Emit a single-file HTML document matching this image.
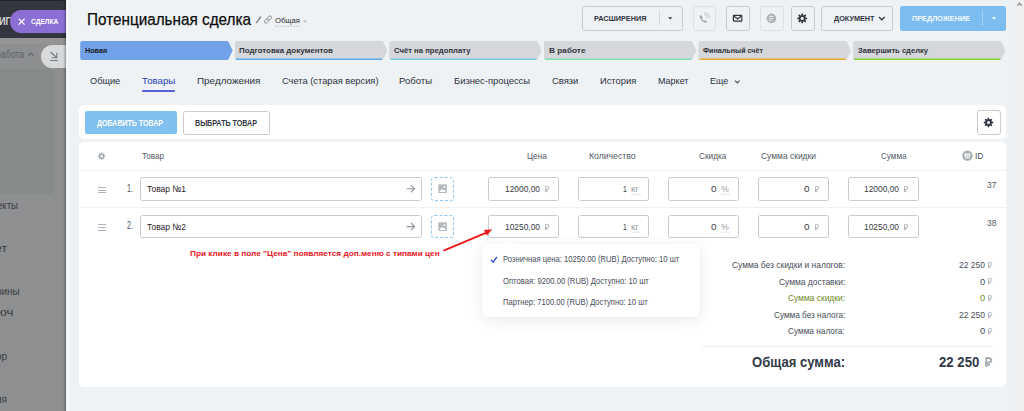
<!DOCTYPE html>
<html><head><meta charset="utf-8"><style>
html,body{margin:0;padding:0;width:1024px;height:411px;overflow:hidden;background:#eef2f4;position:relative;font-family:'Liberation Sans',sans-serif}
.t{position:absolute;white-space:nowrap}
.a{position:absolute;box-sizing:border-box}
</style></head><body>
<div class=a style="left:0px;top:0px;width:67px;height:411px;background:#8e8f91"></div>
<div class=a style="left:-20px;top:69px;width:75.3px;height:125px;background:#878a8a;border-radius:7px"></div>
<div class=a style="left:0px;top:37.5px;width:67px;height:6.5px;background:#939597"></div>
<div class=a style="left:0px;top:0px;width:67px;height:37.5px;background:#33363e"></div>
<div class=a style="left:0px;top:0px;width:67px;height:1px;background:#222428"></div>
<div class=a style="left:9.8px;top:9.7px;width:80px;height:23.4px;background:#8b6fd5;border-radius:12px"></div>
<svg class=a style="left:0;top:0" width="67" height="70" viewBox="0 0 67 70"><path d="M18.6,18.6 L24.6,24.6 M24.6,18.6 L18.6,24.6" stroke="#fff" stroke-width="1.3"/><path d="M28,56.4 L31,53 L34,56.4" stroke="#606367" stroke-width="1.1" fill="none"/></svg>
<div class=a style="left:40.9px;top:45.1px;width:60px;height:22.8px;background:#d7d9da;border-radius:11.4px"></div>
<svg class=a style="left:0;top:0" width="67" height="70" viewBox="0 0 67 70"><path d="M50.5,52 L56.5,57.5 M56.8,52.8 L56.8,57.8 L51.8,57.8 M50.2,60.5 L58,60.5" stroke="#777b80" stroke-width="1.1" fill="none"/></svg>
<div class=a style="left:63.2px;top:0px;width:3px;height:411px;background:linear-gradient(to right,rgba(0,0,0,0),rgba(0,0,0,0.28))"></div>
<div class=a style="left:66.2px;top:0px;width:958px;height:411px;background:#eef2f4"></div>
<div class=a style="left:66.4px;top:0px;width:2.2px;height:411px;background:linear-gradient(to right,#e4e7ea,#fbfcfd 50%,#eef2f4)"></div>
<div class=a style="left:1015px;top:0px;width:9px;height:411px;background:#efefef"></div>
<svg class=a style="left:250px;top:10px" width="70" height="22" viewBox="250 10 70 22"><path d="M256.2,23 L261,16.4" stroke="#8f959d" stroke-width="1.7"/><g transform="rotate(-45 268 19.5)" stroke="#9aa0a7" stroke-width="1" fill="none"><rect x="263.6" y="18" width="4.6" height="3" rx="1.5"/><rect x="267.8" y="18" width="4.6" height="3" rx="1.5"/></g><path d="M275,26.3 L300,26.3" stroke="#aeb3ba" stroke-width="0.8" stroke-dasharray="1.4,1.2"/><path d="M302.8,20.4 L307.2,20.4 L305,22.8Z" fill="#b6bbc1"/></svg>
<div class=a style="left:582px;top:6px;width:101px;height:25px;border:1px solid #c5cbd1;border-radius:2.5px"></div>
<div class=a style="left:658.8px;top:11px;width:1px;height:14px;background:#d3d7dc"></div>
<div class=a style="left:726px;top:6px;width:24px;height:25px;border:1px solid #c5cbd1;border-radius:2.5px"></div>
<div class=a style="left:692.5px;top:6px;width:23.5px;height:25px;border:1px solid #dde1e5;border-radius:2.5px"></div>
<div class=a style="left:759.5px;top:6px;width:24px;height:25px;border:1px solid #dde1e5;border-radius:2.5px"></div>
<div class=a style="left:790.5px;top:6px;width:24px;height:25px;border:1px solid #c5cbd1;border-radius:2.5px"></div>
<div class=a style="left:821px;top:6px;width:71.5px;height:25px;border:1px solid #c5cbd1;border-radius:2.5px"></div>
<div class=a style="left:900px;top:6px;width:105.8px;height:25px;background:#7bbdf0;border-radius:2.5px"></div>
<div class=a style="left:981.8px;top:10.5px;width:1px;height:15.5px;background:#a9d3f5"></div>
<svg class=a style="left:660px;top:0" width="364" height="34" viewBox="660 0 364 34"><path d="M668,17.2 L672.4,17.2 L670.2,19.6Z" fill="#3a404a"/><path d="M991.8,17.2 L996.2,17.2 L994,19.6Z" fill="#ffffff"/><path d="M879,17 L881.8,19.8 L884.6,17" stroke="#2f3541" stroke-width="1.3" fill="none"/><rect x="733.4" y="15.3" width="8.4" height="5.8" rx="0.6" stroke="#2e3440" stroke-width="1.2" fill="none"/><path d="M733.8,16 L737.6,19 L741.4,16" stroke="#2e3440" stroke-width="1.1" fill="none"/><path d="M700.5,14.8 q-1.4,1 -0.6,3.2 q1.6,3 4.6,4.5 q1.8,0.6 2.8,-0.8 l-1.8,-1.6 l-1,0.8 q-1.8,-0.9 -2.6,-2.6 l0.8,-1 Z" fill="#a3a9b0"/><path d="M704,14.4 a3.4,3.4 0 0 1 3.4,3.4 M704.2,12.6 a5.2,5.2 0 0 1 5.2,5.2" stroke="#b5bac0" stroke-width="0.8" fill="none"/><circle cx="771.4" cy="18.4" r="4.8" fill="#aeb3b9"/><path d="M769,16.4 h4.4 M769,18.4 h4.4 M769,20.4 h3" stroke="#eef2f4" stroke-width="0.9"/><path d="M805.47,17.47 L807.14,17.65 L807.14,19.15 L805.47,19.33 L805.17,20.06 L806.23,21.36 L805.16,22.43 L803.86,21.37 L803.13,21.67 L802.95,23.34 L801.45,23.34 L801.27,21.67 L800.54,21.37 L799.24,22.43 L798.17,21.36 L799.23,20.06 L798.93,19.33 L797.26,19.15 L797.26,17.65 L798.93,17.47 L799.23,16.74 L798.17,15.44 L799.24,14.37 L800.54,15.43 L801.27,15.13 L801.45,13.46 L802.95,13.46 L803.13,15.13 L803.86,15.43 L805.16,14.37 L806.23,15.44 L805.17,16.74Z" fill="#2e3440"/><circle cx="802.2" cy="18.4" r="1.6" fill="#eef2f4"/><path d="M1017.4,5.6 L1019.6,3.2 L1021.8,5.6" stroke="#8c8c8c" stroke-width="1.4" fill="none"/></svg>
<svg class=a style="left:0;top:0" width="1024" height="64" viewBox="0 0 1024 64"><path d="M82.2,40.9 L227.00000000000003,40.9 Q228.00000000000003,40.9 228.60000000000002,41.9 L232.60000000000002,50.4 L228.60000000000002,58.9 Q228.00000000000003,59.9 227.00000000000003,59.9 L82.2,59.9 Q80.2,59.9 80.2,57.9 L80.2,42.9 Q80.2,40.9 82.2,40.9Z" fill="#70a1e9"/><path d="M236.9,40.9 L381.7,40.9 Q382.7,40.9 383.3,41.9 L387.3,50.4 L383.3,58.9 Q382.7,59.9 381.7,59.9 L236.9,59.9 Q234.9,59.9 234.9,57.9 L234.9,42.9 Q234.9,40.9 236.9,40.9Z" fill="#d5d7db"/><path d="M235.9,59.199999999999996 L382.2,59.199999999999996" stroke="#5aaef2" stroke-width="1.4"/><path d="M391.3,40.9 L536.1,40.9 Q537.1,40.9 537.7,41.9 L541.7,50.4 L537.7,58.9 Q537.1,59.9 536.1,59.9 L391.3,59.9 Q389.3,59.9 389.3,57.9 L389.3,42.9 Q389.3,40.9 391.3,40.9Z" fill="#d5d7db"/><path d="M390.3,59.199999999999996 L536.6,59.199999999999996" stroke="#78cfe2" stroke-width="1.4"/><path d="M546.0,40.9 L690.8,40.9 Q691.8,40.9 692.4,41.9 L696.4,50.4 L692.4,58.9 Q691.8,59.9 690.8,59.9 L546.0,59.9 Q544.0,59.9 544.0,57.9 L544.0,42.9 Q544.0,40.9 546.0,40.9Z" fill="#d5d7db"/><path d="M545.0,59.199999999999996 L691.3,59.199999999999996" stroke="#7ee2b2" stroke-width="1.4"/><path d="M700.5,40.9 L845.3,40.9 Q846.3,40.9 846.9,41.9 L850.9,50.4 L846.9,58.9 Q846.3,59.9 845.3,59.9 L700.5,59.9 Q698.5,59.9 698.5,57.9 L698.5,42.9 Q698.5,40.9 700.5,40.9Z" fill="#d5d7db"/><path d="M699.5,59.199999999999996 L845.8,59.199999999999996" stroke="#eba82e" stroke-width="1.4"/><path d="M855.1,40.9 L999.9,40.9 Q1000.9,40.9 1001.5,41.9 L1005.5,50.4 L1001.5,58.9 Q1000.9,59.9 999.9,59.9 L855.1,59.9 Q853.1,59.9 853.1,57.9 L853.1,42.9 Q853.1,40.9 855.1,40.9Z" fill="#d5d7db"/><path d="M854.1,59.199999999999996 L1000.4,59.199999999999996" stroke="#80d238" stroke-width="1.4"/></svg>
<div class=a style="left:142px;top:89.8px;width:33.3px;height:1.8px;background:#5961d6;border-radius:1px"></div>
<svg class=a style="left:730px;top:76px" width="14" height="12" viewBox="730 76 14 12"><path d="M735,80.6 L737.3,82.9 L739.6,80.6" stroke="#4a505a" stroke-width="1.1" fill="none"/></svg>
<div class=a style="left:79.2px;top:105.1px;width:926.8px;height:34.3px;background:#fff;border-radius:5px"></div>
<div class=a style="left:84.5px;top:110.9px;width:92px;height:23.5px;background:#7fc0f0;border-radius:2px"></div>
<div class=a style="left:182.6px;top:110.5px;width:87.2px;height:24px;border:1px solid #c6ccd2;border-radius:2.5px"></div>
<div class=a style="left:976.5px;top:110.4px;width:24px;height:24.3px;border:1px solid #c6ccd2;border-radius:3px"></div>
<svg class=a style="left:970px;top:105px" width="36" height="35" viewBox="970 105 36 35"><path d="M991.67,121.60 L993.25,121.78 L993.25,123.22 L991.67,123.40 L991.38,124.11 L992.37,125.35 L991.35,126.37 L990.11,125.38 L989.40,125.67 L989.22,127.25 L987.78,127.25 L987.60,125.67 L986.89,125.38 L985.65,126.37 L984.63,125.35 L985.62,124.11 L985.33,123.40 L983.75,123.22 L983.75,121.78 L985.33,121.60 L985.62,120.89 L984.63,119.65 L985.65,118.63 L986.89,119.62 L987.60,119.33 L987.78,117.75 L989.22,117.75 L989.40,119.33 L990.11,119.62 L991.35,118.63 L992.37,119.65 L991.38,120.89Z" fill="#2e3440"/><circle cx="988.5" cy="122.5" r="1.5" fill="#ffffff"/></svg>
<div class=a style="left:79.2px;top:142px;width:926.8px;height:244.5px;background:#fff;border-radius:5px"></div>
<div class=a style="left:79.2px;top:170.2px;width:926.8px;height:1px;background:#eef0f2"></div>
<div class=a style="left:79.2px;top:206.6px;width:926.8px;height:1px;background:#eef0f2"></div>
<svg class=a style="left:90px;top:145px" width="20" height="20" viewBox="90 145 20 20"><path d="M104.10,155.49 L105.36,155.63 L105.36,156.77 L104.10,156.91 L103.87,157.47 L104.66,158.45 L103.85,159.26 L102.87,158.47 L102.31,158.70 L102.17,159.96 L101.03,159.96 L100.89,158.70 L100.33,158.47 L99.35,159.26 L98.54,158.45 L99.33,157.47 L99.10,156.91 L97.84,156.77 L97.84,155.63 L99.10,155.49 L99.33,154.93 L98.54,153.95 L99.35,153.14 L100.33,153.93 L100.89,153.70 L101.03,152.44 L102.17,152.44 L102.31,153.70 L102.87,153.93 L103.85,153.14 L104.66,153.95 L103.87,154.93Z" fill="#a3a9b0"/><circle cx="101.6" cy="156.2" r="1.2" fill="#ffffff"/></svg>
<svg class=a style="left:958px;top:148px" width="18" height="16" viewBox="958 148 18 16"><circle cx="967.4" cy="155.6" r="5.2" fill="#a9aeb4"/><path d="M964.2,153.2 h6.3 l-1.1,5.4 h-4.1 Z" fill="#f4f5f6"/><path d="M966.6,153.6 v4.6 M968.2,153.6 v4.6" stroke="#b9bdc2" stroke-width="0.7"/></svg>
<div class=a style="left:97.5px;top:186.99999999999997px;width:8.8px;height:1.1px;background:#aeb3b9"></div>
<div class=a style="left:97.5px;top:189.59999999999997px;width:8.8px;height:1.1px;background:#aeb3b9"></div>
<div class=a style="left:97.5px;top:192.19999999999996px;width:8.8px;height:1.1px;background:#aeb3b9"></div>
<div class=a style="left:140.4px;top:177.2px;width:281.2px;height:23.400000000000006px;border:1px solid #c6ccd2;border-radius:2.5px;background:#fff"></div>
<svg class=a style="left:400px;top:177.2px" width="20" height="23.400000000000006" viewBox="400 177.2 20 23.400000000000006"><path d="M406.6,188.89999999999998 L414.6,188.89999999999998 M411,185.29999999999998 L414.6,188.89999999999998 L411,192.49999999999997" stroke="#8f959c" stroke-width="1.1" fill="none"/></svg>
<div class=a style="left:430.5px;top:177.2px;width:23.3px;height:23.400000000000006px;border:1px dashed #8fc8f3;border-radius:3.5px"></div>
<svg class=a style="left:435px;top:177.2px" width="15" height="23.400000000000006" viewBox="435 177.2 15 23.400000000000006"><rect x="438.3" y="184.59999999999997" width="8.5" height="8.6" fill="#b5b9bf"/><path d="M439.3,192.2 L441.8,189.2 L443.3,190.7 L444.3,189.7 L445.8,192.2Z" fill="#fff"/><circle cx="444.3" cy="187.09999999999997" r="0.9" fill="#fff"/></svg>
<div class=a style="left:488.3px;top:177.2px;width:71px;height:23.400000000000006px;border:1px solid #c6ccd2;border-radius:2.5px;background:#fff"></div>
<div class=a style="left:578.2px;top:177.2px;width:71px;height:23.400000000000006px;border:1px solid #c6ccd2;border-radius:2.5px;background:#fff"></div>
<div class=a style="left:668.3px;top:177.2px;width:71px;height:23.400000000000006px;border:1px solid #c6ccd2;border-radius:2.5px;background:#fff"></div>
<div class=a style="left:758.2px;top:177.2px;width:71px;height:23.400000000000006px;border:1px solid #c6ccd2;border-radius:2.5px;background:#fff"></div>
<div class=a style="left:848.4px;top:177.2px;width:71px;height:23.400000000000006px;border:1px solid #c6ccd2;border-radius:2.5px;background:#fff"></div>
<svg class=a style="left:625px;top:177.2px" width="110" height="23.400000000000006" viewBox="625 177.2 110 23.400000000000006"><path d="M631.3,194.49999999999997 L639.1,194.49999999999997 M721.4,194.49999999999997 L729.2,194.49999999999997" stroke="#b8bdc3" stroke-width="0.7" stroke-dasharray="1.2,1"/></svg>
<div class=a style="left:97.5px;top:224.29999999999998px;width:8.8px;height:1.1px;background:#aeb3b9"></div>
<div class=a style="left:97.5px;top:226.89999999999998px;width:8.8px;height:1.1px;background:#aeb3b9"></div>
<div class=a style="left:97.5px;top:229.49999999999997px;width:8.8px;height:1.1px;background:#aeb3b9"></div>
<div class=a style="left:140.4px;top:214.6px;width:281.2px;height:23.200000000000017px;border:1px solid #c6ccd2;border-radius:2.5px;background:#fff"></div>
<svg class=a style="left:400px;top:214.6px" width="20" height="23.200000000000017" viewBox="400 214.6 20 23.200000000000017"><path d="M406.6,226.2 L414.6,226.2 M411,222.6 L414.6,226.2 L411,229.79999999999998" stroke="#8f959c" stroke-width="1.1" fill="none"/></svg>
<div class=a style="left:430.5px;top:214.6px;width:23.3px;height:23.200000000000017px;border:1px dashed #8fc8f3;border-radius:3.5px"></div>
<svg class=a style="left:435px;top:214.6px" width="15" height="23.200000000000017" viewBox="435 214.6 15 23.200000000000017"><rect x="438.3" y="221.89999999999998" width="8.5" height="8.6" fill="#b5b9bf"/><path d="M439.3,229.5 L441.8,226.5 L443.3,228.0 L444.3,227.0 L445.8,229.5Z" fill="#fff"/><circle cx="444.3" cy="224.39999999999998" r="0.9" fill="#fff"/></svg>
<div class=a style="left:488.3px;top:214.6px;width:71px;height:23.200000000000017px;border:1px solid #c6ccd2;border-radius:2.5px;background:#fff"></div>
<div class=a style="left:578.2px;top:214.6px;width:71px;height:23.200000000000017px;border:1px solid #c6ccd2;border-radius:2.5px;background:#fff"></div>
<div class=a style="left:668.3px;top:214.6px;width:71px;height:23.200000000000017px;border:1px solid #c6ccd2;border-radius:2.5px;background:#fff"></div>
<div class=a style="left:758.2px;top:214.6px;width:71px;height:23.200000000000017px;border:1px solid #c6ccd2;border-radius:2.5px;background:#fff"></div>
<div class=a style="left:848.4px;top:214.6px;width:71px;height:23.200000000000017px;border:1px solid #c6ccd2;border-radius:2.5px;background:#fff"></div>
<svg class=a style="left:625px;top:214.6px" width="110" height="23.200000000000017" viewBox="625 214.6 110 23.200000000000017"><path d="M631.3,231.79999999999998 L639.1,231.79999999999998 M721.4,231.79999999999998 L729.2,231.79999999999998" stroke="#b8bdc3" stroke-width="0.7" stroke-dasharray="1.2,1"/></svg>
<svg class=a style="left:430px;top:220px" width="70" height="40" viewBox="430 220 70 40"><path d="M444.2,250.3 L486.5,232.6" stroke="#ee1b1b" stroke-width="1.9" stroke-linecap="round"/><path d="M492.2,229.3 L483.8,230 L486.9,235.4Z" fill="#ee1b1b"/></svg>
<div class=a style="left:482px;top:243.9px;width:218.4px;height:73.4px;background:#fff;border-radius:6px;box-shadow:0 3px 14px rgba(40,50,60,0.10),0 0 2px rgba(40,50,60,0.04)"></div>
<svg class=a style="left:495px;top:236px" width="30" height="10" viewBox="495 236 30 10"><path d="M502.8,244.2 L508.8,239.4 L514.8,244.2Z" fill="#fff"/></svg>
<svg class=a style="left:488px;top:252px" width="12" height="14" viewBox="488 252 12 14"><path d="M490.8,259.6 L493.2,262.2 L497,256.9" stroke="#2c4bbd" stroke-width="1.3" fill="none"/></svg>
<div class=a style="left:702px;top:346px;width:291.3px;height:1px;background:#eceef0"></div>
<div class=t style="left:-1.50px;top:15.52px;font:700 11.2px/11.2px 'Liberation Sans',sans-serif;color:#d6d7d9;transform:scaleX(0.8200);transform-origin:0 0;">ИГ</div>
<div class=t style="left:-4.00px;top:49.53px;font:400 10px/10px 'Liberation Sans',sans-serif;color:#5a5d61;transform:scaleX(0.8686);transform-origin:0 0;">работа</div>
<div class=t style="left:-3.00px;top:200.53px;font:400 10px/10px 'Liberation Sans',sans-serif;color:#3a3c40;transform:scaleX(0.9621);transform-origin:0 0;">екты</div>
<div class=t style="left:-5.00px;top:243.53px;font:400 10px/10px 'Liberation Sans',sans-serif;color:#3a3c40;transform:scaleX(1.2229);transform-origin:0 0;">ет</div>
<div class=t style="left:-3.00px;top:286.54px;font:400 10px/10px 'Liberation Sans',sans-serif;color:#3a3c40;transform:scaleX(0.9829);transform-origin:0 0;">зины</div>
<div class=t style="left:-3.00px;top:308.04px;font:400 10px/10px 'Liberation Sans',sans-serif;color:#3a3c40;transform:scaleX(1.3200);transform-origin:0 0;">юч</div>
<div class=t style="left:-4.00px;top:351.54px;font:400 10px/10px 'Liberation Sans',sans-serif;color:#3a3c40;transform:scaleX(0.9888);transform-origin:0 0;">ор</div>
<div class=t style="left:-4.00px;top:394.54px;font:400 10px/10px 'Liberation Sans',sans-serif;color:#3a3c40;">ия</div>
<div class=t style="left:30.50px;top:17.63px;font:700 8.0px/8.0px 'Liberation Sans',sans-serif;color:#ffffff;transform:scaleX(0.8277);transform-origin:0 0;">СДЕЛКА</div>
<div class=t style="left:87.00px;top:11.47px;font:400 16.1px/16.1px 'Liberation Sans',sans-serif;color:#0c0c0c;transform:scaleX(0.9493);transform-origin:0 0;-webkit-text-stroke:0.25px #0c0c0c;">Потенциальная сделка</div>
<div class=t style="left:275.00px;top:17.23px;font:400 8px/8px 'Liberation Sans',sans-serif;color:#2b2f35;transform:scaleX(0.9552);transform-origin:0 0;">Общая</div>
<div class=t style="left:594.00px;top:14.87px;font:700 7.6px/7.6px 'Liberation Sans',sans-serif;color:#2f3541;transform:scaleX(0.9563);transform-origin:0 0;">РАСШИРЕНИЯ</div>
<div class=t style="left:833.60px;top:14.87px;font:700 7.6px/7.6px 'Liberation Sans',sans-serif;color:#2f3541;transform:scaleX(0.9530);transform-origin:0 0;">ДОКУМЕНТ</div>
<div class=t style="left:912.00px;top:14.87px;font:700 7.6px/7.6px 'Liberation Sans',sans-serif;color:#f7fbff;transform:scaleX(0.9621);transform-origin:0 0;">ПРЕДЛОЖЕНИЕ</div>
<div class=t style="left:85.00px;top:47.21px;font:700 7.2px/7.2px 'Liberation Sans',sans-serif;color:#1a1a1a;transform:scaleX(1.0041);transform-origin:0 0;">Новая</div>
<div class=t style="left:239.30px;top:47.21px;font:700 7.2px/7.2px 'Liberation Sans',sans-serif;color:#30333a;transform:scaleX(1.1018);transform-origin:0 0;">Подготовка документов</div>
<div class=t style="left:393.80px;top:47.21px;font:700 7.2px/7.2px 'Liberation Sans',sans-serif;color:#30333a;transform:scaleX(1.0713);transform-origin:0 0;">Счёт на предоплату</div>
<div class=t style="left:548.50px;top:47.21px;font:700 7.2px/7.2px 'Liberation Sans',sans-serif;color:#30333a;transform:scaleX(1.1496);transform-origin:0 0;">В работе</div>
<div class=t style="left:703.00px;top:47.21px;font:700 7.2px/7.2px 'Liberation Sans',sans-serif;color:#30333a;transform:scaleX(0.9953);transform-origin:0 0;">Финальный счёт</div>
<div class=t style="left:857.50px;top:47.21px;font:700 7.2px/7.2px 'Liberation Sans',sans-serif;color:#30333a;transform:scaleX(1.0561);transform-origin:0 0;">Завершить сделку</div>
<div class=t style="left:89.80px;top:76.20px;font:400 9.8px/9.8px 'Liberation Sans',sans-serif;color:#2b313d;transform:scaleX(0.9373);transform-origin:0 0;">Общие</div>
<div class=t style="left:142.00px;top:76.20px;font:400 9.8px/9.8px 'Liberation Sans',sans-serif;color:#2b3cb8;transform:scaleX(0.9880);transform-origin:0 0;">Товары</div>
<div class=t style="left:196.60px;top:76.20px;font:400 9.8px/9.8px 'Liberation Sans',sans-serif;color:#2b313d;transform:scaleX(1.0096);transform-origin:0 0;">Предложения</div>
<div class=t style="left:281.70px;top:76.20px;font:400 9.8px/9.8px 'Liberation Sans',sans-serif;color:#2b313d;transform:scaleX(0.9499);transform-origin:0 0;">Счета (старая версия)</div>
<div class=t style="left:399.40px;top:76.20px;font:400 9.8px/9.8px 'Liberation Sans',sans-serif;color:#2b313d;transform:scaleX(0.9724);transform-origin:0 0;">Роботы</div>
<div class=t style="left:454.30px;top:76.20px;font:400 9.8px/9.8px 'Liberation Sans',sans-serif;color:#2b313d;transform:scaleX(0.9571);transform-origin:0 0;">Бизнес-процессы</div>
<div class=t style="left:551.70px;top:76.20px;font:400 9.8px/9.8px 'Liberation Sans',sans-serif;color:#2b313d;transform:scaleX(0.9616);transform-origin:0 0;">Связи</div>
<div class=t style="left:599.80px;top:76.20px;font:400 9.8px/9.8px 'Liberation Sans',sans-serif;color:#2b313d;transform:scaleX(0.9526);transform-origin:0 0;">История</div>
<div class=t style="left:658.00px;top:76.20px;font:400 9.8px/9.8px 'Liberation Sans',sans-serif;color:#2b313d;transform:scaleX(0.9190);transform-origin:0 0;">Маркет</div>
<div class=t style="left:710.40px;top:76.20px;font:400 9.8px/9.8px 'Liberation Sans',sans-serif;color:#2b313d;transform:scaleX(0.9179);transform-origin:0 0;">Еще</div>
<div class=t style="left:97.00px;top:118.72px;font:700 8.6px/8.6px 'Liberation Sans',sans-serif;color:#ffffff;transform:scaleX(0.8199);transform-origin:0 0;">ДОБАВИТЬ ТОВАР</div>
<div class=t style="left:195.00px;top:118.72px;font:700 8.6px/8.6px 'Liberation Sans',sans-serif;color:#333844;transform:scaleX(0.8287);transform-origin:0 0;">ВЫБРАТЬ ТОВАР</div>
<div class=t style="left:141.50px;top:150.97px;font:400 9.6px/9.6px 'Liberation Sans',sans-serif;color:#525a66;transform:scaleX(0.8426);transform-origin:0 0;">Товар</div>
<div class=t style="left:526.70px;top:150.97px;font:400 9.6px/9.6px 'Liberation Sans',sans-serif;color:#525a66;transform:scaleX(0.8580);transform-origin:0 0;">Цена</div>
<div class=t style="left:589.40px;top:150.97px;font:400 9.6px/9.6px 'Liberation Sans',sans-serif;color:#525a66;transform:scaleX(0.9024);transform-origin:0 0;">Количество</div>
<div class=t style="left:698.60px;top:150.97px;font:400 9.6px/9.6px 'Liberation Sans',sans-serif;color:#525a66;transform:scaleX(0.8609);transform-origin:0 0;">Скидка</div>
<div class=t style="left:761.40px;top:150.97px;font:400 9.6px/9.6px 'Liberation Sans',sans-serif;color:#525a66;transform:scaleX(0.8824);transform-origin:0 0;">Сумма скидки</div>
<div class=t style="left:880.50px;top:150.97px;font:400 9.6px/9.6px 'Liberation Sans',sans-serif;color:#525a66;transform:scaleX(0.8456);transform-origin:0 0;">Сумма</div>
<div class=t style="left:975.00px;top:150.97px;font:400 9.6px/9.6px 'Liberation Sans',sans-serif;color:#525a66;transform:scaleX(0.8860);transform-origin:0 0;">ID</div>
<div class=t style="left:127.30px;top:183.87px;font:400 10.2px/10.2px 'Liberation Sans',sans-serif;color:#4a515b;transform:scaleX(0.7059);transform-origin:0 0;">1.</div>
<div class=t style="left:147.20px;top:184.37px;font:400 9.6px/9.6px 'Liberation Sans',sans-serif;color:#1f2226;transform:scaleX(0.8738);transform-origin:0 0;">Товар №1</div>
<div class=t style="left:504.80px;top:184.37px;font:400 9.6px/9.6px 'Liberation Sans',sans-serif;color:#383c43;transform:scaleX(0.8747);transform-origin:0 0;">12000,00</div>
<div class=t style="left:623.00px;top:184.37px;font:400 9.6px/9.6px 'Liberation Sans',sans-serif;color:#383c43;transform:scaleX(0.7111);transform-origin:0 0;">1</div>
<div class=t style="left:631.30px;top:184.37px;font:400 9.6px/9.6px 'Liberation Sans',sans-serif;color:#9ba1a9;transform:scaleX(1.0126);transform-origin:0 0;">кг</div>
<div class=t style="left:710.50px;top:184.37px;font:400 9.6px/9.6px 'Liberation Sans',sans-serif;color:#383c43;transform:scaleX(1.0292);transform-origin:0 0;">0</div>
<div class=t style="left:721.40px;top:184.37px;font:400 9.6px/9.6px 'Liberation Sans',sans-serif;color:#9ba1a9;transform:scaleX(0.9143);transform-origin:0 0;">%</div>
<div class=t style="left:803.50px;top:184.37px;font:400 9.6px/9.6px 'Liberation Sans',sans-serif;color:#383c43;transform:scaleX(1.0292);transform-origin:0 0;">0</div>
<div class=t style="left:864.00px;top:184.37px;font:400 9.6px/9.6px 'Liberation Sans',sans-serif;color:#383c43;transform:scaleX(0.8747);transform-origin:0 0;">12000,00</div>
<div class=t style="left:986.70px;top:180.37px;font:400 9.6px/9.6px 'Liberation Sans',sans-serif;color:#535a64;transform:scaleX(0.8714);transform-origin:0 0;">37</div>
<div class=t style="left:127.30px;top:221.47px;font:400 10.2px/10.2px 'Liberation Sans',sans-serif;color:#4a515b;transform:scaleX(0.7059);transform-origin:0 0;">2.</div>
<div class=t style="left:147.20px;top:221.97px;font:400 9.6px/9.6px 'Liberation Sans',sans-serif;color:#1f2226;transform:scaleX(0.8738);transform-origin:0 0;">Товар №2</div>
<div class=t style="left:504.80px;top:221.97px;font:400 9.6px/9.6px 'Liberation Sans',sans-serif;color:#383c43;transform:scaleX(0.8747);transform-origin:0 0;">10250,00</div>
<div class=t style="left:623.00px;top:221.97px;font:400 9.6px/9.6px 'Liberation Sans',sans-serif;color:#383c43;transform:scaleX(0.7111);transform-origin:0 0;">1</div>
<div class=t style="left:631.30px;top:221.97px;font:400 9.6px/9.6px 'Liberation Sans',sans-serif;color:#9ba1a9;transform:scaleX(1.0126);transform-origin:0 0;">кг</div>
<div class=t style="left:710.50px;top:221.97px;font:400 9.6px/9.6px 'Liberation Sans',sans-serif;color:#383c43;transform:scaleX(1.0292);transform-origin:0 0;">0</div>
<div class=t style="left:721.40px;top:221.97px;font:400 9.6px/9.6px 'Liberation Sans',sans-serif;color:#9ba1a9;transform:scaleX(0.9143);transform-origin:0 0;">%</div>
<div class=t style="left:803.50px;top:221.97px;font:400 9.6px/9.6px 'Liberation Sans',sans-serif;color:#383c43;transform:scaleX(1.0292);transform-origin:0 0;">0</div>
<div class=t style="left:864.00px;top:221.97px;font:400 9.6px/9.6px 'Liberation Sans',sans-serif;color:#383c43;transform:scaleX(0.8747);transform-origin:0 0;">10250,00</div>
<div class=t style="left:986.70px;top:217.97px;font:400 9.6px/9.6px 'Liberation Sans',sans-serif;color:#535a64;transform:scaleX(0.8714);transform-origin:0 0;">38</div>
<div class=t style="left:189.70px;top:249.63px;font:700 8px/8px 'Liberation Sans',sans-serif;color:#e8161e;transform:scaleX(1.0318);transform-origin:0 0;">При клике в поле &quot;Цена&quot; появляется доп.меню с типами цен</div>
<div class=t style="left:502.90px;top:255.21px;font:400 9.2px/9.2px 'Liberation Sans',sans-serif;color:#464d59;transform:scaleX(0.8328);transform-origin:0 0;">Розничная цена: 10250.00 (RUB) Доступно: 10 шт</div>
<div class=t style="left:502.90px;top:277.01px;font:400 9.2px/9.2px 'Liberation Sans',sans-serif;color:#464d59;transform:scaleX(0.8346);transform-origin:0 0;">Оптовая: 9200.00 (RUB) Доступно: 10 шт</div>
<div class=t style="left:502.90px;top:298.21px;font:400 9.2px/9.2px 'Liberation Sans',sans-serif;color:#464d59;transform:scaleX(0.8293);transform-origin:0 0;">Партнер: 7100.00 (RUB) Доступно: 10 шт</div>
<div class=t style="left:732.00px;top:259.90px;font:400 9.8px/9.8px 'Liberation Sans',sans-serif;color:#474e59;transform:scaleX(0.8601);transform-origin:0 0;">Сумма без скидки и налогов:</div>
<div class=t style="left:958.90px;top:259.90px;font:400 9.8px/9.8px 'Liberation Sans',sans-serif;color:#474e59;transform:scaleX(0.8676);transform-origin:0 0;">22 250</div>
<div class=t style="left:778.70px;top:276.50px;font:400 9.8px/9.8px 'Liberation Sans',sans-serif;color:#474e59;transform:scaleX(0.8600);transform-origin:0 0;">Сумма доставки:</div>
<div class=t style="left:979.70px;top:276.50px;font:400 9.8px/9.8px 'Liberation Sans',sans-serif;color:#474e59;transform:scaleX(0.9536);transform-origin:0 0;">0</div>
<div class=t style="left:788.00px;top:293.10px;font:400 9.8px/9.8px 'Liberation Sans',sans-serif;color:#6e8a2a;transform:scaleX(0.8590);transform-origin:0 0;">Сумма скидки:</div>
<div class=t style="left:979.70px;top:293.10px;font:400 9.8px/9.8px 'Liberation Sans',sans-serif;color:#6e8a2a;transform:scaleX(0.9536);transform-origin:0 0;">0</div>
<div class=t style="left:773.70px;top:309.70px;font:400 9.8px/9.8px 'Liberation Sans',sans-serif;color:#474e59;transform:scaleX(0.8376);transform-origin:0 0;">Сумма без налога:</div>
<div class=t style="left:958.90px;top:309.70px;font:400 9.8px/9.8px 'Liberation Sans',sans-serif;color:#474e59;transform:scaleX(0.8676);transform-origin:0 0;">22 250</div>
<div class=t style="left:788.40px;top:326.30px;font:400 9.8px/9.8px 'Liberation Sans',sans-serif;color:#474e59;transform:scaleX(0.8426);transform-origin:0 0;">Сумма налога:</div>
<div class=t style="left:979.70px;top:326.30px;font:400 9.8px/9.8px 'Liberation Sans',sans-serif;color:#474e59;transform:scaleX(0.9536);transform-origin:0 0;">0</div>
<div class=t style="left:752.00px;top:355.52px;font:700 13.8px/13.8px 'Liberation Sans',sans-serif;color:#323947;transform:scaleX(0.9461);transform-origin:0 0;">Общая сумма:</div>
<div class=t style="left:939.40px;top:355.52px;font:700 13.8px/13.8px 'Liberation Sans',sans-serif;color:#323947;transform:scaleX(0.9549);transform-origin:0 0;">22 250</div>
<svg class=a style="left:542.90px;top:184.20px" width="8.30" height="10.30" viewBox="542.90 184.20 8.30 10.30"><path d="M545.54,192.50 L545.54,186.62 L546.62,186.62 Q548.77,186.62 548.77,188.24 Q548.77,189.85 546.62,189.85 L544.90,189.85 M544.90,191.24 L547.91,191.24" stroke="#a3a9b0" stroke-width="0.85" fill="none"/></svg>
<svg class=a style="left:812.90px;top:184.20px" width="8.10" height="10.30" viewBox="812.90 184.20 8.10 10.30"><path d="M815.53,192.50 L815.53,186.62 L816.50,186.62 Q818.58,186.62 818.58,188.24 Q818.58,189.85 816.50,189.85 L814.90,189.85 M814.90,191.24 L817.77,191.24" stroke="#a3a9b0" stroke-width="0.85" fill="none"/></svg>
<svg class=a style="left:901.70px;top:184.20px" width="8.10" height="10.30" viewBox="901.70 184.20 8.10 10.30"><path d="M904.33,192.50 L904.33,186.62 L905.30,186.62 Q907.38,186.62 907.38,188.24 Q907.38,189.85 905.30,189.85 L903.70,189.85 M903.70,191.24 L906.57,191.24" stroke="#a3a9b0" stroke-width="0.85" fill="none"/></svg>
<svg class=a style="left:542.90px;top:221.80px" width="8.30" height="10.30" viewBox="542.90 221.80 8.30 10.30"><path d="M545.54,230.10 L545.54,224.22 L546.62,224.22 Q548.77,224.22 548.77,225.84 Q548.77,227.45 546.62,227.45 L544.90,227.45 M544.90,228.84 L547.91,228.84" stroke="#a3a9b0" stroke-width="0.85" fill="none"/></svg>
<svg class=a style="left:812.90px;top:221.80px" width="8.10" height="10.30" viewBox="812.90 221.80 8.10 10.30"><path d="M815.53,230.10 L815.53,224.22 L816.50,224.22 Q818.58,224.22 818.58,225.84 Q818.58,227.45 816.50,227.45 L814.90,227.45 M814.90,228.84 L817.77,228.84" stroke="#a3a9b0" stroke-width="0.85" fill="none"/></svg>
<svg class=a style="left:901.70px;top:221.80px" width="8.10" height="10.30" viewBox="901.70 221.80 8.10 10.30"><path d="M904.33,230.10 L904.33,224.22 L905.30,224.22 Q907.38,224.22 907.38,225.84 Q907.38,227.45 905.30,227.45 L903.70,227.45 M903.70,228.84 L906.57,228.84" stroke="#a3a9b0" stroke-width="0.85" fill="none"/></svg>
<svg class=a style="left:985.60px;top:259.80px" width="8.30" height="10.40" viewBox="985.60 259.80 8.30 10.40"><path d="M988.24,268.20 L988.24,262.23 L989.31,262.23 Q991.48,262.23 991.48,263.87 Q991.48,265.51 989.31,265.51 L987.60,265.51 M987.60,266.92 L990.61,266.92" stroke="#a8adb4" stroke-width="0.85" fill="none"/></svg>
<svg class=a style="left:985.60px;top:276.40px" width="8.30" height="10.40" viewBox="985.60 276.40 8.30 10.40"><path d="M988.24,284.80 L988.24,278.83 L989.31,278.83 Q991.48,278.83 991.48,280.47 Q991.48,282.11 989.31,282.11 L987.60,282.11 M987.60,283.52 L990.61,283.52" stroke="#a8adb4" stroke-width="0.85" fill="none"/></svg>
<svg class=a style="left:985.60px;top:293.00px" width="8.30" height="10.40" viewBox="985.60 293.00 8.30 10.40"><path d="M988.24,301.40 L988.24,295.43 L989.31,295.43 Q991.48,295.43 991.48,297.07 Q991.48,298.71 989.31,298.71 L987.60,298.71 M987.60,300.12 L990.61,300.12" stroke="#a8adb4" stroke-width="0.85" fill="none"/></svg>
<svg class=a style="left:985.60px;top:309.60px" width="8.30" height="10.40" viewBox="985.60 309.60 8.30 10.40"><path d="M988.24,318.00 L988.24,312.03 L989.31,312.03 Q991.48,312.03 991.48,313.67 Q991.48,315.31 989.31,315.31 L987.60,315.31 M987.60,316.72 L990.61,316.72" stroke="#a8adb4" stroke-width="0.85" fill="none"/></svg>
<svg class=a style="left:985.60px;top:326.20px" width="8.30" height="10.40" viewBox="985.60 326.20 8.30 10.40"><path d="M988.24,334.60 L988.24,328.63 L989.31,328.63 Q991.48,328.63 991.48,330.27 Q991.48,331.91 989.31,331.91 L987.60,331.91 M987.60,333.32 L990.61,333.32" stroke="#a8adb4" stroke-width="0.85" fill="none"/></svg>
<svg class=a style="left:982.60px;top:355.30px" width="11.30" height="13.90" viewBox="982.60 355.30 11.30 13.90"><path d="M985.92,367.20 L985.92,358.25 L987.64,358.25 Q990.95,358.25 990.95,360.65 Q990.95,363.04 987.64,363.04 L984.60,363.04 M984.60,365.22 L989.71,365.22" stroke="#a8adb4" stroke-width="1.9" fill="none"/></svg>
</body></html>
